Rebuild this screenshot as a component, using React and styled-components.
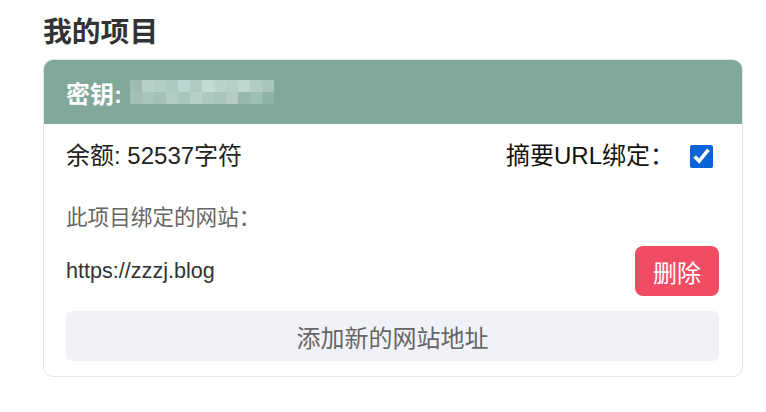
import React from 'react';
import styled, {createGlobalStyle} from 'styled-components';

const GlobalStyle = createGlobalStyle`
    body {
        margin: 8px;
        background: #fff;
        font-family: "Liberation Sans", "Noto Sans CJK SC", sans-serif;
    }
`;

const Page = styled.div`
    padding: 6px 15px 0 35px;
`;

const Title = styled.h2`
    margin: 0 0 9px 0;
    font-size: 28.8px;
    line-height: 36px;
    font-weight: bold;
    color: #333;
`;

const Card = styled.div`
    border: 1px solid #e2e6ef;
    border-radius: 10px;
    overflow: hidden;
    background: #fff;
`;

const CardHeader = styled.div`
    height: 64px;
    background-color: #80a99c;
    display: flex;
    align-items: center;
    padding: 0 22px;
    color: #fff;
    font-size: 24px;
    font-weight: bold;
`;

const KeyLabel = styled.span`
    margin-right: 8px;
`;

const CardBody = styled.div`
    padding: 19px 23px 15px 22px;
`;

const Row = styled.div`
    display: flex;
    align-items: center;
    justify-content: space-between;
`;

const Balance = styled.span`
    font-size: 24px;
    line-height: 26px;
    color: #222;
`;

const BindLabel = styled.label`
    display: flex;
    align-items: center;
    font-size: 24px;
    line-height: 26px;
    color: #111;
`;

const Check = styled.input`
    width: 23px;
    height: 23px;
    margin: 0 6px 0 16px;
    accent-color: #0b63d8;
`;

const SitesTitle = styled.div`
    margin-top: 37px;
    font-size: 21.6px;
    line-height: 24px;
    color: #666;
`;

const SiteRow = styled(Row)`
    margin-top: 16px;
`;

const SiteUrl = styled.span`
    font-size: 21.6px;
    color: #333;
`;

const Button = styled.button`
    border: none;
    font-family: "Liberation Sans", "Noto Sans CJK SC", sans-serif;
    font-size: 24px;
    cursor: pointer;
`;

const DeleteButton = styled(Button)`
    width: 84px;
    height: 50px;
    border-radius: 8px;
    background: #f04d65;
    color: #fff;
`;

const AddButton = styled(Button)`
    display: block;
    width: 100%;
    height: 50px;
    margin-top: 15px;
    border-radius: 6px;
    background: #f1f2f7;
    color: #666;
`;

const mosaic = [
    ['#9dbdb2', '#b8d2ca', '#b4cfc7', '#aec9c0', '#bcd6d1', '#b0cbc3', '#c4dbd4', '#bad3cc', '#b6cfc7', '#c0d7cf', '#b2ccc4', '#a8c6bc'],
    ['#a2c0b6', '#a8c4bb', '#a5c1b7', '#b3ccc4', '#a9c5bc', '#b8d0c8', '#adc8bf', '#a9c4bb', '#b4ccc4', '#96b8ac', '#a0bfb4', '#8fb3a6'],
];

function BlurredKey() {
    const size = 12;
    const cols = mosaic[0].length;
    return (
        <svg width={size * cols} height={size * 2} viewBox={`0 0 ${size * cols} ${size * 2}`}>
            {mosaic.map((row, r) => row.map((c, i) => (
                <rect key={`${r}-${i}`} x={i * size} y={r * size} width={size} height={size} fill={c} />
            )))}
        </svg>
    );
}

export default function App() {
    return (
        <Page>
            <GlobalStyle />
            <Title>我的项目</Title>
            <Card>
                <CardHeader>
                    <KeyLabel>密钥:</KeyLabel>
                    <BlurredKey />
                </CardHeader>
                <CardBody>
                    <Row>
                        <Balance>余额: 52537字符</Balance>
                        <BindLabel>
                            摘要URL绑定：
                            <Check type="checkbox" defaultChecked />
                        </BindLabel>
                    </Row>
                    <SitesTitle>此项目绑定的网站：</SitesTitle>
                    <SiteRow>
                        <SiteUrl>https://zzzj.blog</SiteUrl>
                        <DeleteButton>删除</DeleteButton>
                    </SiteRow>
                    <AddButton>添加新的网站地址</AddButton>
                </CardBody>
            </Card>
        </Page>
    );
}
